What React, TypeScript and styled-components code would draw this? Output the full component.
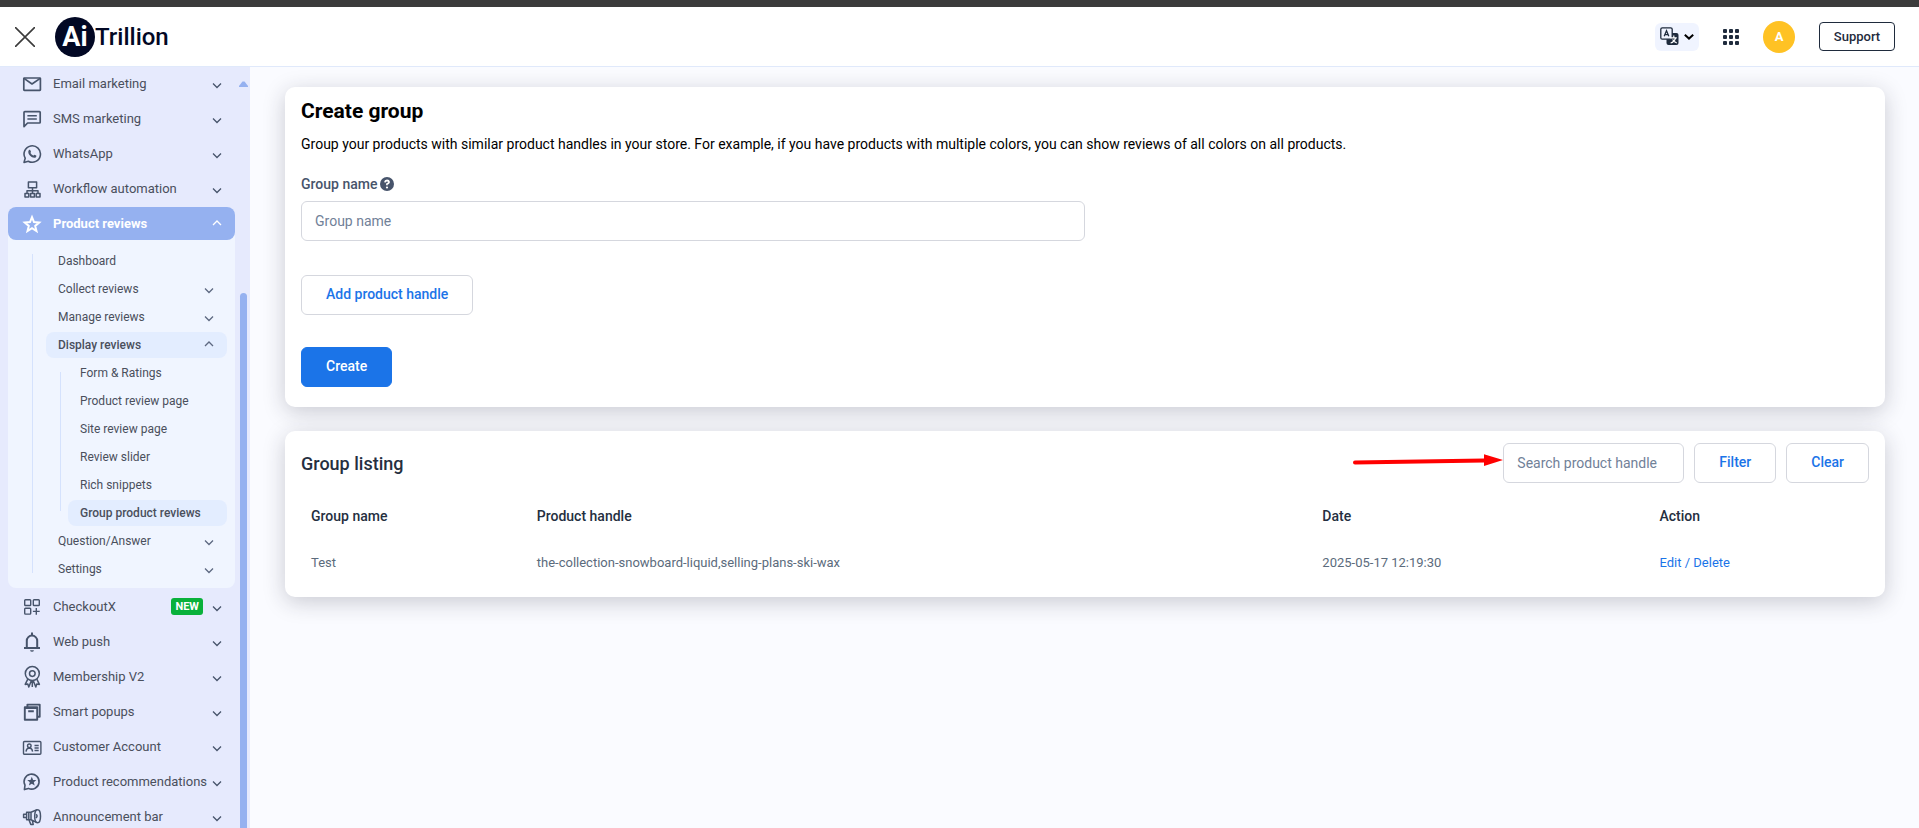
import React from "react";
import styled, { createGlobalStyle, css } from "styled-components";

const GlobalStyle = createGlobalStyle`
  * { box-sizing: border-box; }
  body {
    margin: 0;
    font-family: Roboto, "Liberation Sans", sans-serif;
    font-size: 14px;
    color: #000;
    background: #fafbff;
  }
  button, input { font-family: inherit; }
  a { text-decoration: none; }
  h1, h2, p, ul { margin: 0; padding: 0; }
  ul { list-style: none; }
`;

/* ---------- Shell ---------- */

const Shell = styled.div`
  display: flex;
  flex-direction: column;
  height: 100vh;
  border-top: 7px solid #3b3b3b;
`;

const Header = styled.header`
  display: flex;
  align-items: center;
  height: 60px;
  flex-shrink: 0;
  padding: 0 24px 0 15px;
  background: #fff;
  border-bottom: 1px solid #e0e9fb;
`;

const CloseButton = styled.button`
  display: flex;
  padding: 0;
  margin-right: 20px;
  border: 0;
  background: none;
`;

const Logo = styled.a`
  display: flex;
  align-items: center;
  color: #020824;
  font-size: 24px;
  font-weight: 500;
  line-height: 40px;
`;

const LogoMark = styled.span`
  width: 40px;
  height: 40px;
  border-radius: 50%;
  background: #020824;
  color: #fff;
  font-size: 27px;
  font-weight: 700;
  text-align: center;
`;

const HeaderTools = styled.div`
  display: flex;
  align-items: center;
  margin-left: auto;
  gap: 24px;
`;

const LanguageButton = styled.button`
  display: flex;
  align-items: center;
  justify-content: center;
  gap: 5px;
  width: 44px;
  height: 28px;
  padding: 0;
  border: 0;
  border-radius: 6px;
  background: #f0f4ff;
`;

const PlainButton = styled.button`
  display: flex;
  padding: 0;
  border: 0;
  background: none;
`;

const Avatar = styled.button`
  width: 32px;
  height: 32px;
  padding: 0;
  border: 0;
  border-radius: 50%;
  background: #ffc224;
  color: #fff;
  font-size: 13px;
  font-weight: 700;
`;

const SupportButton = styled.button`
  width: 76px;
  height: 29px;
  padding: 0;
  border: 1px solid #1f2b3d;
  border-radius: 4px;
  background: #fff;
  color: #1f2b3d;
  font-size: 13px;
  font-weight: 500;
`;

const Body = styled.div`
  display: flex;
  flex: 1;
  min-height: 0;
`;

/* ---------- Sidebar ---------- */

const Sidebar = styled.aside`
  display: flex;
  width: 250px;
  flex-shrink: 0;
  padding-left: 8px;
  overflow: hidden;
  background: #e6eafd;
`;

const Nav = styled.nav`
  width: 227px;
`;

const NavList = styled.ul`
  display: flex;
  flex-direction: column;
  gap: 2px;
`;

const NavSection = styled.li<{ $open?: boolean }>`
  border-radius: 8px;
  ${(p) => p.$open && css`background: #f0f5ff;`}
`;

const NavLink = styled.a<{ $active?: boolean }>`
  display: flex;
  align-items: center;
  height: 33px;
  padding: 0 13px 0 14px;
  border-radius: 8px;
  color: #4a4f5c;
  font-size: 13px;
  white-space: nowrap;
  svg { flex-shrink: 0; color: #47546b; }
  ${(p) =>
    p.$active &&
    css`
      background: #95b1f0;
      color: #fff;
      font-weight: 700;
      svg { color: #fff; }
    `}
`;

const NavLabel = styled.span`
  flex: 1;
  margin-left: 11px;
`;

const NewBadge = styled.span`
  margin-right: 9px;
  padding: 0 4px;
  border-radius: 3px;
  background: #09b13b;
  color: #fff;
  font-size: 11px;
  font-weight: 700;
  line-height: 17px;
`;

const SubMenu = styled.ul<{ $level: number }>`
  position: relative;
  display: flex;
  flex-direction: column;
  gap: 2px;
  ${(p) => p.$level === 1 && css`padding: 8px 8px 6px 38px;`}
  ${(p) => p.$level === 2 && css`padding: 2px 0 0 22px;`}
  &::before {
    content: "";
    position: absolute;
    width: 1px;
    background: #d5e2fd;
    top: 14px;
    bottom: 15px;
    left: ${(p) => (p.$level === 1 ? 24 : 14)}px;
  }
`;

const SubLink = styled.a<{ $active?: boolean }>`
  display: flex;
  align-items: center;
  justify-content: space-between;
  height: 26px;
  padding: 0 13px 0 12px;
  border-radius: 8px;
  color: #4a4f5c;
  font-size: 12px;
  white-space: nowrap;
  svg { color: #5d6881; }
  ${(p) => p.$active && css`background: #e3edff; font-weight: 500;`}
`;

const ScrollRail = styled.div`
  display: flex;
  flex-direction: column;
  align-items: center;
  width: 9px;
  margin-left: 4px;
  padding-top: 14px;
`;

const RailGap = styled.div`
  flex: 206;
`;

const RailThumb = styled.div`
  flex: 535;
  width: 7px;
  border-radius: 4px 4px 0 0;
  background: #95b1f0;
`;

/* ---------- Content ---------- */

const Main = styled.main`
  flex: 1;
  min-width: 0;
  display: flex;
  flex-direction: column;
  gap: 24px;
  padding: 20px 34px 24px 35px;
  overflow: auto;
`;

const Card = styled.section`
  padding: 12px 16px;
  border-radius: 10px;
  background: #fff;
  box-shadow: 0 5px 22px rgba(30, 30, 50, 0.22);
`;

const CardTitle = styled.h1`
  font-size: 21px;
  font-weight: 700;
  line-height: 24px;
`;

const Intro = styled.p`
  margin-top: 11px;
  line-height: 20px;
`;

const Form = styled.form`
  display: flex;
  flex-direction: column;
  align-items: flex-start;
  margin-top: 20px;
  padding-bottom: 8px;
`;

const FieldLabel = styled.label`
  display: flex;
  align-items: center;
  gap: 3px;
  height: 20px;
  margin-bottom: 7px;
  color: #47546b;
  font-weight: 500;
`;

const TextInput = styled.input<{ $width: string }>`
  width: ${(p) => p.$width};
  height: 40px;
  padding: 0 13px;
  border: 1px solid #d5d7de;
  border-radius: 6px;
  background: #fff;
  font-size: 14px;
  &::placeholder { color: #718198; opacity: 1; }
`;

const Button = styled.button<{ $primary?: boolean }>`
  height: 40px;
  padding: 0 24px 2px;
  border: 1px solid ${(p) => (p.$primary ? "#1b74e8" : "#d5d7de")};
  border-radius: 6px;
  background: ${(p) => (p.$primary ? "#1b74e8" : "#fff")};
  color: ${(p) => (p.$primary ? "#fff" : "#1b74e8")};
  font-size: 14px;
  font-weight: 500;
`;

const FormActions = styled.div`
  display: flex;
  flex-direction: column;
  align-items: flex-start;
  gap: 32px;
  margin-top: 34px;
`;

const ListingHead = styled.div`
  display: flex;
  align-items: center;
  justify-content: space-between;
`;

const ListingTitle = styled.h2`
  color: #252f3f;
  font-size: 18px;
  font-weight: 500;
`;

const Filters = styled.div`
  display: flex;
  gap: 10px;
`;

const SearchField = styled.div`
  position: relative;
`;

const Pointer = styled.svg`
  position: absolute;
  right: 100%;
  top: 9px;
`;

const Table = styled.table`
  width: 100%;
  margin-top: 10px;
  border-collapse: collapse;
  table-layout: fixed;
  text-align: left;
`;

const HeadCell = styled.th<{ $width: string }>`
  width: ${(p) => p.$width};
  height: 46px;
  padding: 0 10px;
  color: #252f3f;
  font-size: 14px;
  font-weight: 500;
`;

const Cell = styled.td`
  height: 46px;
  padding: 0 10px;
  color: #5b6b7c;
  font-size: 13px;
`;

const ActionLinks = styled.span`
  color: #1b74e8;
  a { color: inherit; }
`;

/* ---------- Icons ---------- */

const Icon = ({ children, width = 1.5 }: { children: React.ReactNode; width?: number }) => (
  <svg width="20" height="20" viewBox="0 0 20 20" fill="none" stroke="currentColor" strokeWidth={width} strokeLinejoin="round" aria-hidden>
    {children}
  </svg>
);

const Chevron = ({ up }: { up?: boolean }) => (
  <svg width="10" height="10" viewBox="0 0 10 10" fill="none" stroke="currentColor" strokeWidth="1.3" aria-hidden>
    <path d={up ? "M1 6L5 2l4 4" : "M1 4.5l4 4 4-4"} />
  </svg>
);

const icons = {
  mail: (
    <Icon width={1.7}><rect x="1.8" y="4" width="16.6" height="12.4" rx=".6" /><path d="M2 4.4l8 5.6 8.2-5.6" /></Icon>
  ),
  sms: (
    <Icon width={1.7}><path d="M2 17.6V3.4q0-.8.8-.8h14.6q.8 0 .8.8v9.8q0 .8-.8.8H5.6z" /><path d="M5.4 6.8h9.4M5.4 10h9.4" strokeWidth="1.4" /></Icon>
  ),
  whatsapp: (
    <Icon width={1.6}>
      <path d="M2 18.4l1.2-4.2a8.2 8.2 0 1 1 3.1 3z" />
      <path d="M6.6 6.4c.4-.8 1.4-.9 1.7-.2l.7 1.5c.2.5-.7 1-.5 1.4.6 1.2 1.5 2 2.7 2.5.4.1.9-1 1.4-.8l1.5.8c.6.3.2 1.4-.4 1.8-1.6 1-4.2-.1-5.6-1.6-1.5-1.6-2.3-3.8-1.5-5.4z" fill="currentColor" stroke="none" />
    </Icon>
  ),
  workflow: (
    <Icon width={1.5}><rect x="6.4" y="3" width="8.2" height="5.8" /><path d="M10.5 8.8v5.6M5 14.4v-2.6h11v2.6" /><rect x="3" y="14.6" width="3.8" height="3.4" /><rect x="8.6" y="14.6" width="3.8" height="3.4" /><rect x="14.2" y="14.6" width="3.8" height="3.4" /></Icon>
  ),
  star: (
    <Icon width={2}><path strokeLinejoin="miter" d="M10 3.2l2 4.9 5.2.4-4 3.4 1.3 5.1-4.5-2.8-4.5 2.8 1.3-5.1-4-3.4 5.2-.4z" /></Icon>
  ),
  checkout: (
    <Icon width={1.4}><rect x="2.7" y="2.7" width="6" height="5.8" rx=".8" /><rect x="11.3" y="2.7" width="6" height="5.8" rx=".8" /><rect x="2.7" y="11.3" width="6" height="5.8" rx=".8" /><path d="M14.3 11v6.8M10.9 14.4h6.8" /></Icon>
  ),
  bell: (
    <Icon width={2}><path d="M4.8 16V8.8a5.2 5.2 0 0 1 10.4 0V16M2 16.1h16M10 .6v2.8" /><path d="M8 18.2h4q-.4 1.5-2 1.5t-2-1.5z" fill="currentColor" stroke="none" /></Icon>
  ),
  medal: (
    <svg width="20" height="24" viewBox="0 0 20 24" fill="none" stroke="currentColor" strokeWidth="1.5" strokeLinejoin="round" aria-hidden>
      <circle cx="10.3" cy="8.6" r="7" /><circle cx="10.3" cy="8.6" r="2.8" /><path d="M5.8 14.2l-2.6 5.2 2.6-.4 1 3 2.4-6M14.8 14.2l2.6 5.2-2.6-.4-1 3-2.4-6M10.3 16v6" />
    </svg>
  ),
  popups: (
    <Icon width={1.9}><rect x="2.8" y="5.3" width="12.4" height="12.4" /><path d="M5.4 5V2.6h12.3v12.2h-2.4M6.2 9.2h5.6M2.8 6h12.4" /></Icon>
  ),
  account: (
    <Icon width={1.4}><rect x="1.5" y="4.5" width="17.4" height="12.8" rx="1" /><circle cx="7.3" cy="8.8" r="1.8" /><path d="M4 14.6q.3-3.4 3.3-3.6 3 .2 3.3 3.6M12.5 8.5h4.2M12.5 11h4.2M12.5 13.5h4.2" /></Icon>
  ),
  recommend: (
    <Icon width={1.6}>
      <path d="M2.4 17.6l.6-4.4a7.5 7.5 0 1 1 3.4 3.2z" />
      <path d="M9.8 4.8l1.3 3.1 3.3.2-2.6 2.1.9 3.3-2.9-1.8-2.9 1.8.9-3.3-2.6-2.1 3.3-.2z" fill="currentColor" stroke="none" />
    </Icon>
  ),
  megaphone: (
    <Icon width={1.5}><path d="M9 5.2L15 2.6M9 12.8l6 2.8M9 5.2H4.6v7.6H9zM4.6 7.2H1.6v3.4h3M6.8 5.2v7.6M7 13l1.8 4.4h2.4l-.8-3.8" /><ellipse cx="15.6" cy="9.2" rx="2.9" ry="6.5" /><path d="M14 7.4q2.2 1.6 0 3.6" /></Icon>
  ),
};

const TranslateIcon = () => (
  <svg width="19" height="19" viewBox="0 0 19 19" fill="none" aria-hidden>
    <rect x="6.5" y="6" width="12" height="12" rx="2" fill="#1f2b3d" />
    <rect x=".8" y=".8" width="11.4" height="11.4" rx="1.5" fill="#f0f4ff" stroke="#1f2b3d" strokeWidth="1.3" />
    <path d="M4.2 9.3L6.5 3.8l2.3 5.5M5 7.6h3" stroke="#1f2b3d" strokeWidth="1.3" />
    <path d="M13.8 8.5v2M10.5 10.8h6.3M15.6 11q-1.4 4-5 5M12.6 12.6q1.2 2.4 4.2 3.4" stroke="#fff" strokeWidth="1.2" />
  </svg>
);

const GridIcon = () => (
  <svg width="16" height="16" viewBox="0 0 16 16" fill="#1f2b3d" aria-hidden>
    {[0, 6, 12].map((y) => [0, 6, 12].map((x) => <rect key={`${x}-${y}`} x={x} y={y} width="4" height="4" rx="1" />))}
  </svg>
);

const HelpIcon = () => (
  <svg width="14" height="14" viewBox="0 0 14 14" aria-hidden>
    <circle cx="7" cy="7" r="7" fill="#47546b" />
    <path d="M4.9 5.3Q5.2 3.5 7 3.5t2.1 1.6Q9.1 6.3 7 7.1V8.3" fill="none" stroke="#fff" strokeWidth="1.8" />
    <circle cx="7" cy="10.5" r="1.1" fill="#fff" />
  </svg>
);

/* ---------- Data ---------- */

type SubItem = { label: string; expandable?: boolean; active?: boolean; items?: SubItem[] };
type NavItem = { label: string; icon: React.ReactNode; badge?: string; items?: SubItem[] };

const navItems: NavItem[] = [
  { label: "Email marketing", icon: icons.mail },
  { label: "SMS marketing", icon: icons.sms },
  { label: "WhatsApp", icon: icons.whatsapp },
  { label: "Workflow automation", icon: icons.workflow },
  {
    label: "Product reviews",
    icon: icons.star,
    items: [
      { label: "Dashboard" },
      { label: "Collect reviews", expandable: true },
      { label: "Manage reviews", expandable: true },
      {
        label: "Display reviews",
        expandable: true,
        active: true,
        items: [
          { label: "Form & Ratings" },
          { label: "Product review page" },
          { label: "Site review page" },
          { label: "Review slider" },
          { label: "Rich snippets" },
          { label: "Group product reviews", active: true },
        ],
      },
      { label: "Question/Answer", expandable: true },
      { label: "Settings", expandable: true },
    ],
  },
  { label: "CheckoutX", icon: icons.checkout, badge: "NEW" },
  { label: "Web push", icon: icons.bell },
  { label: "Membership V2", icon: icons.medal },
  { label: "Smart popups", icon: icons.popups },
  { label: "Customer Account", icon: icons.account },
  { label: "Product recommendations", icon: icons.recommend },
  { label: "Announcement bar", icon: icons.megaphone },
];

const groups = [
  { name: "Test", handle: "the-collection-snowboard-liquid,selling-plans-ski-wax", date: "2025-05-17 12:19:30" },
];

const SubItems = ({ items, level }: { items: SubItem[]; level: number }) => (
  <SubMenu $level={level}>
    {items.map((item) => (
      <li key={item.label}>
        <SubLink href="#" $active={item.active}>
          {item.label}
          {item.expandable && <Chevron up={!!item.items} />}
        </SubLink>
        {item.items && <SubItems items={item.items} level={level + 1} />}
      </li>
    ))}
  </SubMenu>
);

export default function App() {
  return (
    <>
      <GlobalStyle />
      <Shell>
        <Header>
          <CloseButton aria-label="Close">
            <svg width="20" height="20" viewBox="0 0 20 20" stroke="#3b3b3b" strokeWidth="1.6">
              <path d="M0 0l20 20M20 0L0 20" />
            </svg>
          </CloseButton>
          <Logo href="#">
            <LogoMark>Ai</LogoMark>Trillion
          </Logo>
          <HeaderTools>
            <LanguageButton aria-label="Language">
              <TranslateIcon />
              <svg width="10" height="6" viewBox="0 0 10 6" fill="none" stroke="#000" strokeWidth="2" aria-hidden>
                <path d="M.8.8L5 4.6 9.2.8" />
              </svg>
            </LanguageButton>
            <PlainButton aria-label="Apps"><GridIcon /></PlainButton>
            <Avatar>A</Avatar>
            <SupportButton>Support</SupportButton>
          </HeaderTools>
        </Header>
        <Body>
          <Sidebar>
            <Nav>
              <NavList>
                {navItems.map((item) => (
                  <NavSection key={item.label} $open={!!item.items}>
                    <NavLink href="#" $active={!!item.items}>
                      {item.icon}
                      <NavLabel>{item.label}</NavLabel>
                      {item.badge && <NewBadge>{item.badge}</NewBadge>}
                      <Chevron up={!!item.items} />
                    </NavLink>
                    {item.items && <SubItems items={item.items} level={1} />}
                  </NavSection>
                ))}
              </NavList>
            </Nav>
            <ScrollRail>
              <svg width="9" height="6" viewBox="0 0 9 6" fill="#95b1f0" aria-hidden>
                <path d="M3.5.5h2L9 5v1H0V5z" />
              </svg>
              <RailGap />
              <RailThumb />
            </ScrollRail>
          </Sidebar>
          <Main>
            <Card>
              <CardTitle>Create group</CardTitle>
              <Intro>
                Group your products with similar product handles in your store. For example, if you have products with
                multiple colors, you can show reviews of all colors on all products.
              </Intro>
              <Form>
                <FieldLabel htmlFor="group-name">
                  Group name <HelpIcon />
                </FieldLabel>
                <TextInput id="group-name" $width="50%" placeholder="Group name" />
                <FormActions>
                  <Button type="button">Add product handle</Button>
                  <Button type="button" $primary>Create</Button>
                </FormActions>
              </Form>
            </Card>
            <Card>
              <ListingHead>
                <ListingTitle>Group listing</ListingTitle>
                <Filters>
                  <SearchField>
                    <Pointer width="150" height="20" viewBox="0 0 150 20" fill="red" aria-hidden>
                      <path d="M2 8.6L131 6.6V2.2L150 8 131 14V10.4L2 12.6Q0 12.6 0 10.6T2 8.6z" />
                    </Pointer>
                    <TextInput $width="181px" placeholder="Search product handle" aria-label="Search product handle" />
                  </SearchField>
                  <Button type="button">Filter</Button>
                  <Button type="button">Clear</Button>
                </Filters>
              </ListingHead>
              <Table>
                <thead>
                  <tr>
                    <HeadCell $width="14.4%">Group name</HeadCell>
                    <HeadCell $width="50.1%">Product handle</HeadCell>
                    <HeadCell $width="21.5%">Date</HeadCell>
                    <HeadCell $width="14%">Action</HeadCell>
                  </tr>
                </thead>
                <tbody>
                  {groups.map((group) => (
                    <tr key={group.name}>
                      <Cell>{group.name}</Cell>
                      <Cell>{group.handle}</Cell>
                      <Cell>{group.date}</Cell>
                      <Cell>
                        <ActionLinks>
                          <a href="#">Edit</a> / <a href="#">Delete</a>
                        </ActionLinks>
                      </Cell>
                    </tr>
                  ))}
                </tbody>
              </Table>
            </Card>
          </Main>
        </Body>
      </Shell>
    </>
  );
}
